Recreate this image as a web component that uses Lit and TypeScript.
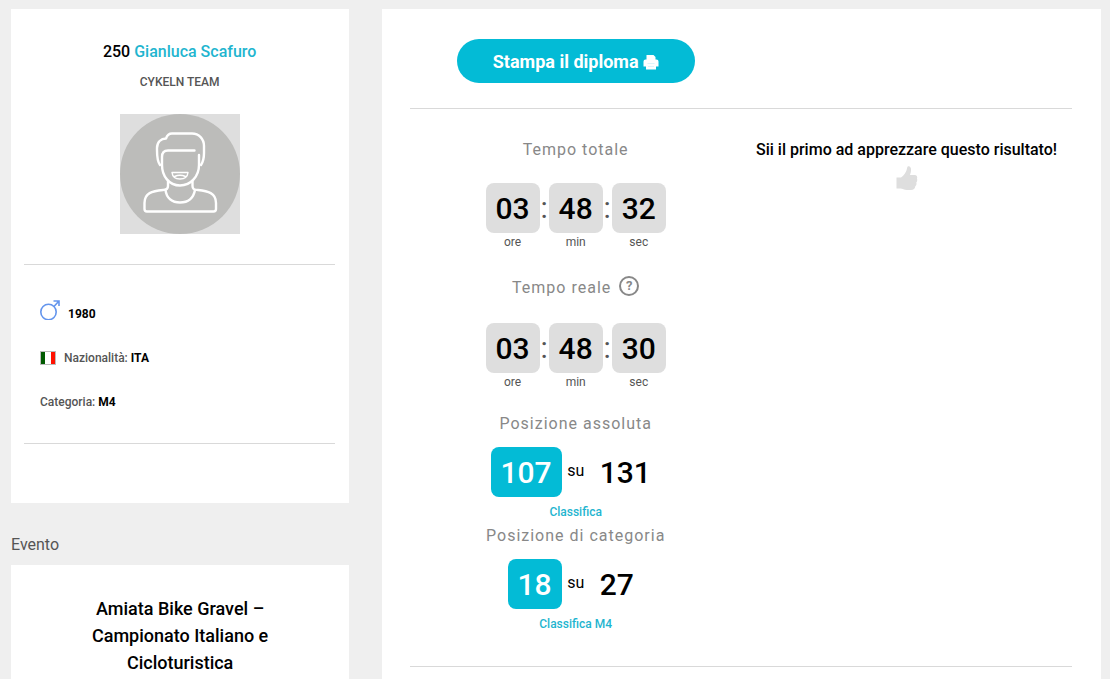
import { LitElement, html, css, svg } from "lit";
import { customElement, property } from "lit/decorators.js";

const avatar = svg`
  <svg class="avatar" viewBox="0 0 120 120" role="img" aria-label="Foto atleta">
    <rect width="120" height="120" fill="#dedede"/>
    <circle cx="60" cy="60" r="60" fill="#bcbcba"/>
    <g fill="none" stroke="#fff" stroke-width="2.4" stroke-linecap="round" stroke-linejoin="round">
      <path d="M40 51C37 47 37 42 37 36V34C37 28 41 24.500 46 24.500C47 21.500 49 19.500 52 19.500H72C79 19.500 84 25 84 32V39C84 45 83 48 81 51"/>
      <path d="M74.500 36.500H48C44 36.500 42 39 42 43V51C42 62 49 71.500 60 71.500C71 71.500 79 62 79 51V41"/>
      <path d="M48 67V72C48 75 46.500 76 43 76C32 77 24.500 79 24.500 89V95Q24.500 97.500 27 97.500H93.500Q96 97.500 96 95V89C96 79 88 77 78 76C74 76 72.500 75 72.500 72V67"/>
      <path d="M45.500 76C46.500 84 52 88.500 60 88.500C68 88.500 73.500 84 75 76"/>
      <path stroke-width="1.400" d="M52 58.500H68C67.500 63 65 65 60 65C55 65 52.500 63 52 58.500ZM54.500 62.500Q60 60 65.500 62.500"/>
    </g>
  </svg>`;

const male = svg`
  <svg class="gender" viewBox="0 0 20 20" role="img" aria-label="Uomo">
    <g fill="none" stroke="#6495ed" stroke-width="1.600">
      <circle cx="8.500" cy="12" r="7.700"/>
      <path d="M14 6.500L18.500 1.500M13.500 1H19V6"/>
    </g>
  </svg>`;

const flag = svg`
  <svg class="flag" viewBox="0 0 16 14" role="img" aria-label="Italia">
    <rect width="16" height="14" fill="#bbb"/>
    <rect x="1" y="1" width="4" height="12" fill="#005a00"/>
    <rect x="5" y="1" width="6" height="12" fill="#fff"/>
    <rect x="11" y="1" width="4" height="12" fill="#f10"/>
  </svg>`;

const printer = svg`
  <svg class="printer" viewBox="0 0 16 16" aria-hidden="true">
    <path fill="#fff" d="M3.500 1H10.500L12.500 3V5.500H13.500Q15.500 5.500 15.500 7.500V12.500H13V15.500H3V12.500H.500V7.500Q.500 5.500 2.500 5.500H3.500Z"/>
    <path fill="none" stroke="#c5eff6" stroke-width=".600" d="M4.500 9.500H11.500M5 12.500H11"/>
  </svg>`;

const thumb = svg`
  <svg class="thumb" viewBox="0 0 22 24" aria-hidden="true">
    <path fill="#dedede" d="M.500 11.500H5C8 9.500 10.500 6 11 2.500C11.200 0 12.500 0 13.500 .500C15.500 1.500 15.500 5 14 9H18.500C21 9 21.700 11 21 12.500C21.500 14 21.200 15.500 20.300 16.500C20.800 18 20.300 19.500 19.300 20.300C19.200 22.500 17.500 24 15 24H11C8 24 6.500 22.500 4.500 22.500H.500Z"/>
  </svg>`;

@customElement("race-time")
export class RaceTime extends LitElement {
  @property({ type: Array }) parts: string[] = [];

  static styles = css`
    :host { display: block; }
    .row { display: flex; justify-content: center; }
    .unit { display: flex; flex-direction: column; align-items: center; }
    .value {
      padding: 2px 10px 0;
      border-radius: 8px;
      background: #dedede;
      color: #000;
      font-size: 30px;
      font-weight: 500;
      line-height: 48px;
    }
    .label { font-size: 12px; line-height: 18px; color: #555; }
    .colon { width: 9px; text-align: center; font-size: 30px; line-height: 50px; color: #555; }
  `;

  render() {
    const labels = ["ore", "min", "sec"];
    return html`<div class="row">
      ${this.parts.map((p, i) => html`
        ${i ? html`<span class="colon">:</span>` : ""}
        <div class="unit">
          <span class="value">${p}</span>
          <span class="label">${labels[i]}</span>
        </div>`)}
    </div>`;
  }
}

@customElement("race-rank")
export class RaceRank extends LitElement {
  @property() place = "";
  @property() total = "";
  @property() label = "";

  static styles = css`
    :host { display: block; }
    .row { display: flex; justify-content: center; }
    .num {
      padding: 2px 10px 0;
      border-radius: 8px;
      color: #000;
      font-size: 30px;
      font-weight: 500;
      line-height: 48px;
    }
    .place { background: #03bbd6; color: #fff; }
    .of { width: 28px; text-align: center; font-size: 16px; line-height: 48px; color: #000; }
    .list {
      display: block;
      margin-top: 5px;
      text-align: center;
      font-size: 12px;
      font-weight: 500;
      line-height: 20px;
      color: #1fb5cf;
      text-decoration: none;
    }
  `;

  render() {
    return html`
      <div class="row">
        <span class="num place">${this.place}</span>
        <span class="of">su</span>
        <span class="num">${this.total}</span>
      </div>
      <a class="list" href="#">${this.label}</a>`;
  }
}

@customElement("app-root")
export class AppRoot extends LitElement {
  static styles = css`
    :host {
      display: block;
      box-sizing: border-box;
      min-height: 100vh;
      background: #efefef;
      color: #555;
      font-family: Roboto, "Liberation Sans", sans-serif;
      font-size: 16px;
    }
    .page {
      display: grid;
      grid-template-columns: minmax(0, 8fr) minmax(0, 17fr);
      gap: 33px;
      box-sizing: border-box;
      min-height: 100vh;
      padding: 9px 9px 0 11px;
    }
    .side { display: flex; flex-direction: column; }
    .card { background: #fff; }
    .profile { padding: 31px 14px 59px 13px; text-align: center; }
    h1, h2, h3, p, ul { margin: 0; padding: 0; }
    a { color: #1fb5cf; text-decoration: none; }
    .name { font-size: 16px; font-weight: 500; line-height: 24px; color: #000; }
    .team { margin-top: 8px; font-size: 12px; font-weight: 500; line-height: 20px; color: #555; }
    .avatar { display: block; width: 120px; height: 120px; margin: 22px auto 30px; }
    .facts {
      display: flex;
      flex-direction: column;
      gap: 24px;
      padding: 39px 16px 31px;
      border-top: 1px solid #d9d9d9;
      border-bottom: 1px solid #d9d9d9;
      list-style: none;
      font-size: 12px;
      font-weight: 500;
      line-height: 20px;
      text-align: left;
    }
    .facts li { display: flex; align-items: center; gap: 8px; }
    .facts b { font-weight: 700; color: #000; }
    .gender { width: 20px; height: 20px; margin-bottom: 4px; margin-top: -4px; }
    .flag { width: 16px; height: 14px; }
    .section { padding: 30px 0 9px; font-size: 16px; font-weight: 400; line-height: 23px; color: #555; }
    .event { flex: 1; padding: 30px 40px 0; text-align: center; }
    .event h2 { font-size: 18px; font-weight: 500; line-height: 27px; color: #000; }
    .result { padding: 30px 29px 0 28px; }
    .cols { display: grid; grid-template-columns: 1fr 1fr; }
    .center { text-align: center; }
    .print {
      display: inline-flex;
      align-items: center;
      gap: 4px;
      height: 44px;
      padding: 2px 36px 0;
      border: 0;
      border-radius: 22px;
      background: #03bbd6;
      color: #fff;
      font: 700 18px/42px Roboto, "Liberation Sans", sans-serif;
    }
    .printer { width: 16px; height: 16px; }
    .scores {
      margin-top: 25px;
      padding: 29px 0 32px;
      border-top: 1px solid #d9d9d9;
      border-bottom: 1px solid #d9d9d9;
    }
    .title { text-align: center; font-size: 16px; font-weight: 400; line-height: 24px; letter-spacing: 1px; color: #888; }
    .total { margin: 21px 0 23px; }
    .real { display: flex; align-items: center; justify-content: center; gap: 8px; line-height: 28px; margin-bottom: 21px; }
    .help {
      width: 20px;
      height: 20px;
      margin-bottom: 4px;
      padding: 0;
      border: 2px solid #888;
      border-radius: 10px;
      background: none;
      color: #888;
      font: 700 13px/16px Roboto, sans-serif;
    }
    .absolute { margin-top: 21px; }
    .rank { margin-top: 11px; }
    .rank + .title { margin-top: 2px; }
    .likes { font-weight: 500; line-height: 24px; color: #000; }
    .like { padding: 0; border: 0; background: none; line-height: 0; }
    .thumb { width: 22px; height: 24px; margin-top: 4px; }
  `;

  render() {
    return html`
      <main class="page">
        <div class="side">
          <section class="card profile">
            <h1 class="name">250 <a href="#">Gianluca Scafuro</a></h1>
            <p class="team">CYKELN TEAM</p>
            ${avatar}
            <ul class="facts">
              <li>${male}<b>1980</b></li>
              <li>${flag}<span>Nazionalità: <b>ITA</b></span></li>
              <li><span>Categoria: <b>M4</b></span></li>
            </ul>
          </section>
          <h3 class="section">Evento</h3>
          <section class="card event">
            <h2>Amiata Bike Gravel – Campionato Italiano e Cicloturistica</h2>
          </section>
        </div>
        <section class="card result">
          <div class="cols">
            <div class="center">
              <button class="print" type="button">Stampa il diploma${printer}</button>
            </div>
          </div>
          <div class="cols scores">
            <div>
              <h2 class="title">Tempo totale</h2>
              <race-time class="total" .parts=${["03", "48", "32"]}></race-time>
              <h2 class="title real">Tempo reale
                <button class="help" type="button" aria-label="Cos'è il tempo reale">?</button>
              </h2>
              <race-time .parts=${["03", "48", "30"]}></race-time>
              <h2 class="title absolute">Posizione assoluta</h2>
              <race-rank class="rank" place="107" total="131" label="Classifica"></race-rank>
              <h2 class="title">Posizione di categoria</h2>
              <race-rank class="rank" place="18" total="27" label="Classifica M4"></race-rank>
            </div>
            <div class="center">
              <p class="likes">Sii il primo ad apprezzare questo risultato!</p>
              <button class="like" type="button" aria-label="Mi piace">${thumb}</button>
            </div>
          </div>
        </section>
      </main>`;
  }
}
